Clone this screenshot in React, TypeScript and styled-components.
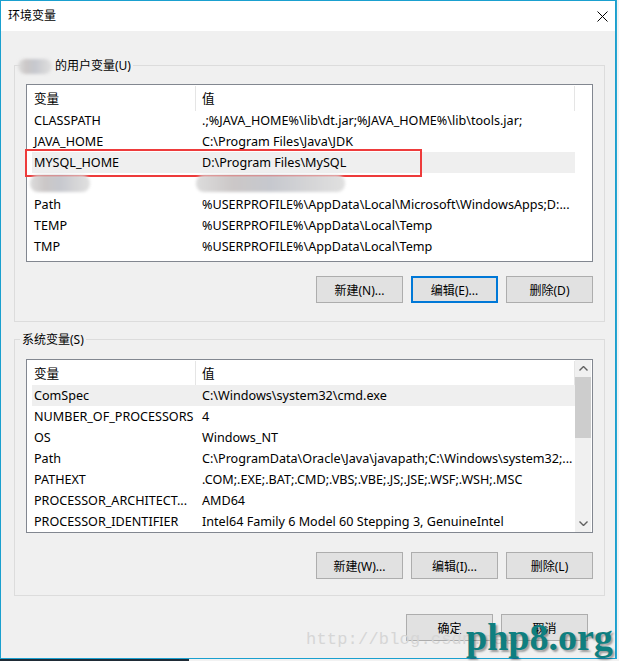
import React from "react";
import styled, { createGlobalStyle } from "styled-components";

const GlobalStyle = createGlobalStyle`
  html, body { margin: 0; padding: 0; }
  body {
    width: 619px;
    height: 661px;
    overflow: hidden;
    background: #ececec;
    font-family: "Noto Sans", "Noto Sans CJK SC", sans-serif;
    font-size: 12px;
    color: #000;
  }
  * { box-sizing: border-box; }
`;

const Screen = styled.div`
  width: 619px;
  height: 661px;
  display: flex;
  flex-direction: column;
`;

const Desk = styled.div`
  display: flex;
  height: 659px;
`;

const Window = styled.div`
  position: relative;
  width: 616px;
  height: 659px;
  border: 1px solid #1aa0cf;
  background: #f0f0f0;
  display: flex;
  flex-direction: column;
`;

const BackWindow = styled.div`
  flex: 1;
  background: #f4f4f4;
  border-left: 1px solid #2ba5cf;
`;

const Taskbar = styled.div`
  height: 2px;
  display: flex;
`;

const TaskbarDark = styled.div`
  width: 189px;
  background: #1f2b36;
`;

const TaskbarLight = styled.div`
  flex: 1;
  background: #f2f2f2;
`;

const TitleBar = styled.div`
  height: 30px;
  flex: none;
  background: #fff;
  display: flex;
  align-items: center;
  justify-content: space-between;
  padding: 0 7px 0 7px;
`;

const Title = styled.span`
  font-size: 12px;
  line-height: 16px;
`;

const CloseButton = styled.button`
  border: none;
  background: none;
  padding: 0;
  width: 11px;
  height: 11px;
  display: flex;
`;

const Body = styled.div`
  flex: 1;
  display: flex;
  flex-direction: column;
  padding: 34px 10px 0 13px;
`;

const Group = styled.div<{ $mt: number; $pt: number; $pb: number }>`
  position: relative;
  margin-top: ${(p) => p.$mt}px;
  border: 1px solid #dcdcdc;
  padding: ${(p) => p.$pt}px 11px ${(p) => p.$pb}px 11px;
  display: flex;
  flex-direction: column;
`;

const Legend = styled.div`
  position: absolute;
  top: -8px;
  left: 5px;
  padding: 0 2px;
  background: #f0f0f0;
  line-height: 16px;
  display: flex;
  align-items: center;
`;

const BlurBlock = styled.span<{ $w: number; $ml: number; $mr?: number; $h?: number }>`
  display: inline-block;
  vertical-align: middle;
  flex: none;
  width: ${(p) => p.$w}px;
  height: ${(p) => p.$h ?? 17}px;
  margin-left: ${(p) => p.$ml}px;
  margin-right: ${(p) => p.$mr ?? 0}px;
  border-radius: 8px;
  background: linear-gradient(
    90deg,
    #dcdcdc 0%,
    #cbc7c7 25%,
    #c6c8ce 50%,
    #d4d4d6 75%,
    #e0e0e0 100%
  );
  filter: blur(1.5px);
`;

const ListBox = styled.div<{ $h: number }>`
  height: ${(p) => p.$h}px;
  border: 1px solid #828790;
  background: #fff;
  display: flex;
  font-size: 12.6px;
`;

const ListMain = styled.div`
  flex: 1;
  min-width: 0;
  padding-left: 5px;
  display: flex;
  flex-direction: column;
`;

const Header = styled.div`
  display: grid;
  grid-template-columns: 164px 1fr;
  height: 25px;
`;

const HeaderCell = styled.div<{ $pl: number }>`
  padding-left: ${(p) => p.$pl}px;
  line-height: 25px;
  border-right: 1px solid #e5e5e5;
  margin: 1px 0 0 0;
`;

const Row = styled.div<{ $sel?: boolean }>`
  position: relative;
  display: grid;
  grid-template-columns: 164px 1fr;
  height: 21px;
  line-height: 21px;
  background: ${(p) => (p.$sel ? "#efefef" : "transparent")};
`;

const Cell = styled.div<{ $pl: number }>`
  padding-left: ${(p) => p.$pl}px;
  white-space: nowrap;
  overflow: hidden;
  text-overflow: ellipsis;
`;

const BlurCell = styled.div`
  display: flex;
  align-items: center;
`;

const RedMark = styled.span`
  position: absolute;
  top: -3px;
  left: -7px;
  width: 397px;
  height: 28px;
  border: 2px solid #ee3b3b;
  pointer-events: none;
`;

const Gutter = styled.div`
  width: 17px;
  flex: none;
  display: flex;
`;

const ScrollTrack = styled.div`
  width: 16px;
  background: #f0f0f0;
  display: flex;
  flex-direction: column;
`;

const ScrollArrow = styled.div`
  height: 17px;
  flex: none;
  display: flex;
  align-items: center;
  justify-content: center;
`;

const ScrollThumb = styled.div`
  height: 61px;
  flex: none;
  background: #cdcdcd;
`;

const ScrollSpace = styled.div`
  flex: 1;
`;

const ButtonRow = styled.div<{ $mt: number; $mr?: number }>`
  display: flex;
  justify-content: flex-end;
  gap: 8px;
  margin-top: ${(p) => p.$mt}px;
  margin-right: ${(p) => p.$mr ?? 0}px;
`;

const Button = styled.button<{ $focus?: boolean }>`
  width: 87px;
  height: 27px;
  padding: 0;
  font-family: "Noto Sans", "Noto Sans CJK SC", sans-serif;
  font-size: 12px;
  color: #000;
  background: #e1e1e1;
  border: ${(p) => (p.$focus ? "2px solid #0078d7" : "1px solid #adadad")};
`;

const CsdnMark = styled.div`
  position: absolute;
  left: 305px;
  top: 629px;
  font-family: "Liberation Mono", monospace;
  font-size: 17px;
  line-height: 20px;
  letter-spacing: 0.2px;
  color: #d6d6d6;
  pointer-events: none;
`;

const PhpMark = styled.div`
  position: absolute;
  left: 465px;
  top: 617px;
  font-family: "Liberation Serif", serif;
  font-weight: bold;
  font-size: 38px;
  line-height: 1;
  color: #0f7f80;
  text-shadow: 2px 2px 2px rgba(0, 0, 0, 0.35);
  pointer-events: none;
`;

type Item = { name: string; value: string; sel?: boolean; mark?: boolean; blur?: boolean };

const userVars: Item[] = [
  { name: "CLASSPATH", value: ".;%JAVA_HOME%\\lib\\dt.jar;%JAVA_HOME%\\lib\\tools.jar;" },
  { name: "JAVA_HOME", value: "C:\\Program Files\\Java\\JDK" },
  { name: "MYSQL_HOME", value: "D:\\Program Files\\MySQL", sel: true, mark: true },
  { name: "", value: "", blur: true },
  { name: "Path", value: "%USERPROFILE%\\AppData\\Local\\Microsoft\\WindowsApps;D:..." },
  { name: "TEMP", value: "%USERPROFILE%\\AppData\\Local\\Temp" },
  { name: "TMP", value: "%USERPROFILE%\\AppData\\Local\\Temp" },
];

const sysVars: Item[] = [
  { name: "ComSpec", value: "C:\\Windows\\system32\\cmd.exe", sel: true },
  { name: "NUMBER_OF_PROCESSORS", value: "4" },
  { name: "OS", value: "Windows_NT" },
  { name: "Path", value: "C:\\ProgramData\\Oracle\\Java\\javapath;C:\\Windows\\system32;..." },
  { name: "PATHEXT", value: ".COM;.EXE;.BAT;.CMD;.VBS;.VBE;.JS;.JSE;.WSF;.WSH;.MSC" },
  { name: "PROCESSOR_ARCHITECT...", value: "AMD64" },
  { name: "PROCESSOR_IDENTIFIER", value: "Intel64 Family 6 Model 60 Stepping 3, GenuineIntel" },
];

const Chevron = ({ down }: { down?: boolean }) => (
  <svg width="9" height="5" viewBox="0 0 9 5">
    <path
      d={down ? "M0.5 0.5 L4.5 4.5 L8.5 0.5" : "M0.5 4.5 L4.5 0.5 L8.5 4.5"}
      stroke="#606060"
      strokeWidth="1.4"
      fill="none"
    />
  </svg>
);

const VarList = ({ items, height, scroll }: { items: Item[]; height: number; scroll?: boolean }) => (
  <ListBox $h={height}>
    <ListMain>
      <Header>
        <HeaderCell $pl={2}>变量</HeaderCell>
        <HeaderCell $pl={6}>值</HeaderCell>
      </Header>
      {items.map((it, i) => (
        <Row key={i} $sel={it.sel}>
          {it.blur ? (
            <>
              <BlurCell>
                <BlurBlock $w={60} $ml={-2} />
              </BlurCell>
              <BlurCell>
                <BlurBlock $w={149} $ml={0} />
              </BlurCell>
            </>
          ) : (
            <>
              <Cell $pl={2}>{it.name}</Cell>
              <Cell $pl={6}>{it.value}</Cell>
            </>
          )}
          {it.mark && <RedMark />}
        </Row>
      ))}
    </ListMain>
    <Gutter>
      {scroll && (
        <ScrollTrack>
          <ScrollArrow>
            <Chevron />
          </ScrollArrow>
          <ScrollThumb />
          <ScrollSpace />
          <ScrollArrow>
            <Chevron down />
          </ScrollArrow>
        </ScrollTrack>
      )}
    </Gutter>
  </ListBox>
);

export default function App() {
  return (
    <>
      <GlobalStyle />
      <Screen>
        <Desk>
          <Window>
            <TitleBar>
              <Title>环境变量</Title>
              <CloseButton aria-label="关闭">
                <svg width="11" height="11" viewBox="0 0 11 11">
                  <path d="M0.5 0.5 L10.5 10.5 M10.5 0.5 L0.5 10.5" stroke="#000" strokeWidth="1" />
                </svg>
              </CloseButton>
            </TitleBar>
            <Body>
              <Group $mt={0} $pt={18} $pb={18}>
                <Legend>
                  <BlurBlock $w={34} $ml={-4} $mr={3} $h={15} />
                  的用户变量(U)
                </Legend>
                <VarList items={userVars} height={178} />
                <ButtonRow $mt={14}>
                  <Button>新建(N)...</Button>
                  <Button $focus>编辑(E)...</Button>
                  <Button>删除(D)</Button>
                </ButtonRow>
              </Group>
              <Group $mt={17} $pt={19} $pb={16}>
                <Legend>系统变量(S)</Legend>
                <VarList items={sysVars} height={174} scroll />
                <ButtonRow $mt={19}>
                  <Button>新建(W)...</Button>
                  <Button>编辑(I)...</Button>
                  <Button>删除(L)</Button>
                </ButtonRow>
              </Group>
              <ButtonRow $mt={18} $mr={17}>
                <Button>确定</Button>
                <Button>取消</Button>
              </ButtonRow>
            </Body>
            <CsdnMark>http://blog.csdn.net/</CsdnMark>
            <PhpMark>php8.org</PhpMark>
          </Window>
          <BackWindow />
        </Desk>
        <Taskbar>
          <TaskbarDark />
          <TaskbarLight />
        </Taskbar>
      </Screen>
    </>
  );
}
